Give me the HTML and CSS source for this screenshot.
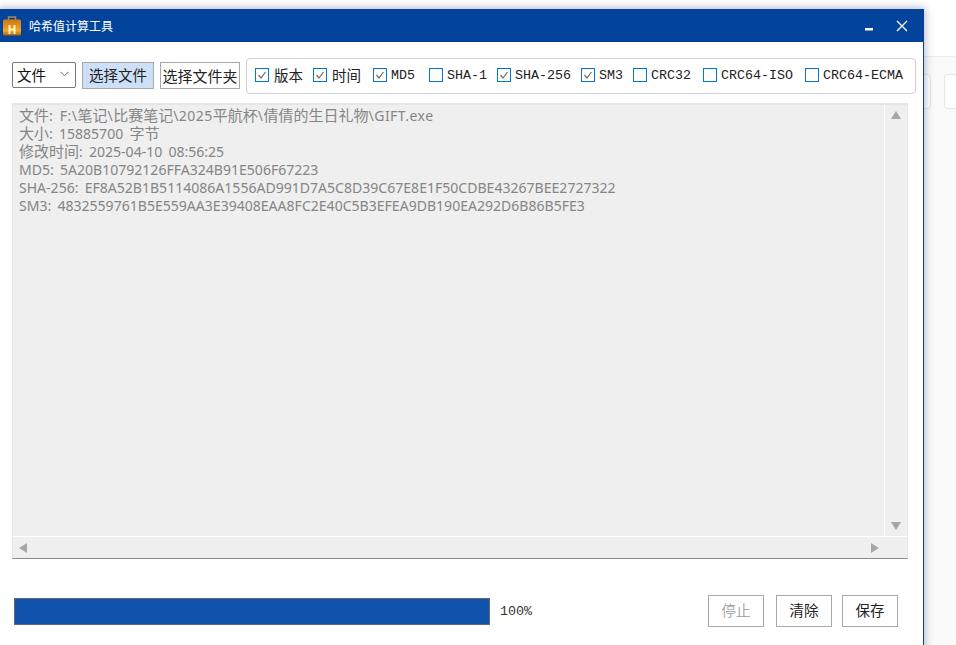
FILE: index.html
```html
<!DOCTYPE html>
<html lang="zh-CN">
<head>
<meta charset="utf-8">
<title>哈希值计算工具</title>
<link rel="stylesheet" href="styles.css">
</head>
<body>
<div class="desk">
  <div class="desk-top"></div>
  <div class="desk-panel">
    <div class="desk-card"></div>
    <div class="desk-card"></div>
  </div>
</div>
<main class="window">
  <header class="titlebar">
    <svg class="app-icon" width="18" height="20" viewBox="0 0 18 20">
      <defs>
        <linearGradient id="case" x1="0" y1="0" x2="0" y2="1">
          <stop offset="0" stop-color="#c87c14"/>
          <stop offset=".35" stop-color="#dc8c18"/>
          <stop offset=".7" stop-color="#f2a828"/>
          <stop offset="1" stop-color="#a86408"/>
        </linearGradient>
      </defs>
      <path d="M5.500 4V1h7v3" fill="none" stroke="#a08a60" stroke-width="1.500"/>
      <rect x="0" y="3.500" width="18" height="16" rx="1.500" fill="url(#case)"/>
      <path d="M6.500 9v9M11.500 9v9M6.500 13.500h5" stroke="#fff4c4" stroke-width="2" fill="none"/>
    </svg>
    <span class="title">哈希值计算工具</span>
    <span class="win-controls">
      <svg width="10" height="10" viewBox="0 0 10 10"><rect x="0" y="7" width="8" height="2.500" fill="#fff"/></svg>
      <svg width="12" height="12" viewBox="0 0 12 12"><path d="M1 1l10 10M11 1L1 11" stroke="#fff" stroke-width="1.300" fill="none"/></svg>
    </span>
  </header>

  <section class="toolbar">
    <div class="select"><span>文件</span>
      <svg width="9" height="6" viewBox="0 0 9 6"><path d="M.5.8l4 4 4-4" stroke="#666" fill="none"/></svg>
    </div>
    <button class="btn btn-active">选择文件</button>
    <button class="btn btn-wide">选择文件夹</button>
    <div class="checks">
      <label class="check cjk"><i class="box"><svg width="12" height="12" viewBox="0 0 12 12"><path d="M2.500 6l2.500 3 4.500-6" stroke="#6f6f6f" stroke-width="1.200" fill="none"/></svg></i>版本</label>
      <label class="check cjk"><i class="box"><svg width="12" height="12" viewBox="0 0 12 12"><path d="M2.500 6l2.500 3 4.500-6" stroke="#6f6f6f" stroke-width="1.200" fill="none"/></svg></i>时间</label>
      <label class="check gap-12"><i class="box"><svg width="12" height="12" viewBox="0 0 12 12"><path d="M2.500 6l2.500 3 4.500-6" stroke="#6f6f6f" stroke-width="1.200" fill="none"/></svg></i>MD5</label>
      <label class="check gap-14"><i class="box"></i>SHA-1</label>
      <label class="check"><i class="box"><svg width="12" height="12" viewBox="0 0 12 12"><path d="M2.500 6l2.500 3 4.500-6" stroke="#6f6f6f" stroke-width="1.200" fill="none"/></svg></i>SHA-256</label>
      <label class="check"><i class="box"><svg width="12" height="12" viewBox="0 0 12 12"><path d="M2.500 6l2.500 3 4.500-6" stroke="#6f6f6f" stroke-width="1.200" fill="none"/></svg></i>SM3</label>
      <label class="check"><i class="box"></i>CRC32</label>
      <label class="check gap-12"><i class="box"></i>CRC64-ISO</label>
      <label class="check gap-12"><i class="box"></i>CRC64-ECMA</label>
    </div>
  </section>

  <section class="log">
    <div class="log-main">
      <div class="log-text">
        <div class="log-line log-path"><span class="zh">文件</span>: F:\<span class="zh">笔记</span>\<span class="zh">比赛笔记</span>\2025<span class="zh">平航杯</span>\<span class="zh">倩倩的生日礼物</span>\GIFT.exe</div>
        <div class="log-line"><span class="zh">大小</span>: 15885700 <span class="zh">字节</span></div>
        <div class="log-line"><span class="zh">修改时间</span>: 2025-04-10 08:56:25</div>
        <div class="log-line">MD5: 5A20B10792126FFA324B91E506F67223</div>
        <div class="log-line">SHA-256: EF8A52B1B5114086A1556AD991D7A5C8D39C67E8E1F50CDBE43267BEE2727322</div>
        <div class="log-line">SM3: 4832559761B5E559AA3E39408EAA8FC2E40C5B3EFEA9DB190EA292D6B86B5FE3</div>
      </div>
      <div class="vbar">
        <svg width="10" height="8" viewBox="0 0 10 8"><path d="M5 0L10 8H0z" fill="#a6a6a6"/></svg>
        <svg width="10" height="8" viewBox="0 0 10 8"><path d="M5 8L10 0H0z" fill="#a6a6a6"/></svg>
      </div>
    </div>
    <div class="hbar">
      <svg width="8" height="10" viewBox="0 0 8 10"><path d="M0 5L8 0v10z" fill="#a6a6a6"/></svg>
      <svg width="8" height="10" viewBox="0 0 8 10"><path d="M8 5L0 0v10z" fill="#a6a6a6"/></svg>
    </div>
  </section>

  <footer class="footer">
    <div class="progress"></div>
    <span class="percent">100%</span>
    <div class="actions">
      <button class="btn btn-foot" disabled>停止</button>
      <button class="btn btn-foot">清除</button>
      <button class="btn btn-foot btn-last">保存</button>
    </div>
  </footer>
</main>
</body>
</html>
```
FILE: styles.css
```css
* { box-sizing: border-box; }
html, body { margin: 0; height: 100%; }
body {
  position: relative;
  width: 956px;
  height: 645px;
  overflow: hidden;
  background: #fff;
  font-family: "Noto Sans CJK SC", sans-serif;
}
.desk { display: flex; flex-direction: column; height: 100%; }
.desk-top { height: 56px; background: #fff; }
.desk-panel {
  flex: 1;
  display: flex;
  justify-content: flex-start;
  gap: 13px;
  padding: 17px 0 0 8px;
  background: #fafafa;
  border-top: 1px solid #ececec;
  margin-left: 900px;
}
.desk-card {
  width: 24px;
  height: 35px;
  background: #fff;
  border: 1px solid #e6e6e6;
  border-radius: 4px;
}
.desk-card:last-child { width: 12px; border-right: 0; border-radius: 4px 0 0 4px; }

.window {
  position: absolute;
  left: -1px;
  top: 9px;
  width: 925px;
  height: 640px;
  display: flex;
  flex-direction: column;
  background: #fff;
  border-right: 1px solid #0e3f8c;
  box-shadow: 0 0 8px 1px rgba(60, 70, 120, .38);
}
.titlebar {
  height: 33px;
  flex: none;
  display: flex;
  align-items: center;
  padding: 0 15px 0 4px;
  background: #02449b;
  color: #fff;
}
.app-icon { margin: 0 8px 0 0; flex: none; }
.title { font-size: 12px; }
.win-controls { margin-left: auto; display: flex; align-items: center; gap: 21px; }

.toolbar {
  display: flex;
  align-items: flex-start;
  gap: 6px;
  margin: 16px 7px 0 13px;
  height: 36px;
}
.select {
  width: 64px;
  height: 26px;
  margin-top: 4px;
  display: flex;
  align-items: center;
  justify-content: space-between;
  padding: 0 6px 2px 4px;
  border: 1px solid #7a7a7a;
  border-radius: 2px;
  font-size: 14.500px;
  color: #111;
}
.btn {
  font-family: "Noto Sans CJK SC", sans-serif;
  font-size: 14.500px;
  line-height: 1;
  color: #222;
  background: #fff;
  border: 1px solid #a8a8a8;
  padding: 0 0 1px;
  height: 27px;
  width: 72px;
  margin-top: 4px;
}
.btn-active { background: #cde0f7; }
.btn-wide { width: 80px; font-size: 15px; }
.btn:disabled { color: #a8a8a8; }
.checks {
  flex: 1;
  height: 36px;
  display: flex;
  align-items: center;
  gap: 10px;
  padding: 0 0 2px 8px;
  border: 1px solid #cfcfdf;
  border-radius: 4px;
  font-family: "Liberation Mono", "Noto Sans CJK SC", monospace;
  font-size: 13.330px;
  color: #222;
}
.check { display: flex; align-items: center; gap: 4px; white-space: nowrap; height: 20px; line-height: 20px; padding-top: 2px; }
.check .box { margin-bottom: 2px; }
.check.cjk { gap: 5px; padding-top: 0; font-family: "Noto Sans CJK SC", sans-serif; font-size: 14.500px; }
.check.cjk .box { margin-bottom: 0; }
.gap-12 { margin-left: 2px; }
.gap-14 { margin-left: 4px; }
.box {
  width: 14px;
  height: 14px;
  flex: none;
  display: flex;
  align-items: center;
  justify-content: center;
  border: 1px solid #0078d4;
}

.log {
  width: 896px;
  height: 456px;
  margin: 9px 0 0 13px;
  display: flex;
  flex-direction: column;
  background: #efefef;
  border-top: 2px solid #e6e6e6;
  border-left: 1px solid #e2e2e2;
  border-right: 1px solid #e6e6e6;
  border-bottom: 1px solid #8a8a8a;
}
.log-main { flex: 1; min-height: 0; display: flex; border-bottom: 1px solid #fff; }
.log-text {
  flex: 1;
  padding: 2px 6px;
  font-family: "Noto Sans", "Noto Sans CJK SC", sans-serif;
  font-size: 14.050px;
  line-height: 18px;
  word-spacing: 2.500px;
  color: #858585;
  white-space: nowrap;
  border-right: 1px solid #fff;
}
.log-line { height: 18px; }
.log-path { letter-spacing: .45px; }
.zh {
  line-height: 14px;
  font-family: "Noto Sans CJK SC", sans-serif;
  font-size: 15px;
  letter-spacing: 0;
}
.vbar {
  width: 22px;
  display: flex;
  flex-direction: column;
  align-items: center;
  justify-content: space-between;
  padding: 6px 1px 6px 0;
}
.hbar {
  height: 21px;
  flex: none;
  display: flex;
  align-items: center;
  justify-content: space-between;
  padding: 0 28px 0 6px;
}

.footer {
  display: flex;
  align-items: center;
  margin: 36px 25px 0 15px;
  height: 32px;
}
.progress {
  width: 476px;
  height: 27px;
  background: #1053ad;
  border: 1px solid #5e6a78;
}
.percent {
  margin-left: 10px;
  font-family: "Liberation Mono", monospace;
  font-size: 13.330px;
  color: #333;
}
.actions { margin-left: auto; display: flex; gap: 12px; }
.btn-foot { width: 56px; height: 32px; margin-top: 0; }
.btn-last { margin-left: -2px; }
```
